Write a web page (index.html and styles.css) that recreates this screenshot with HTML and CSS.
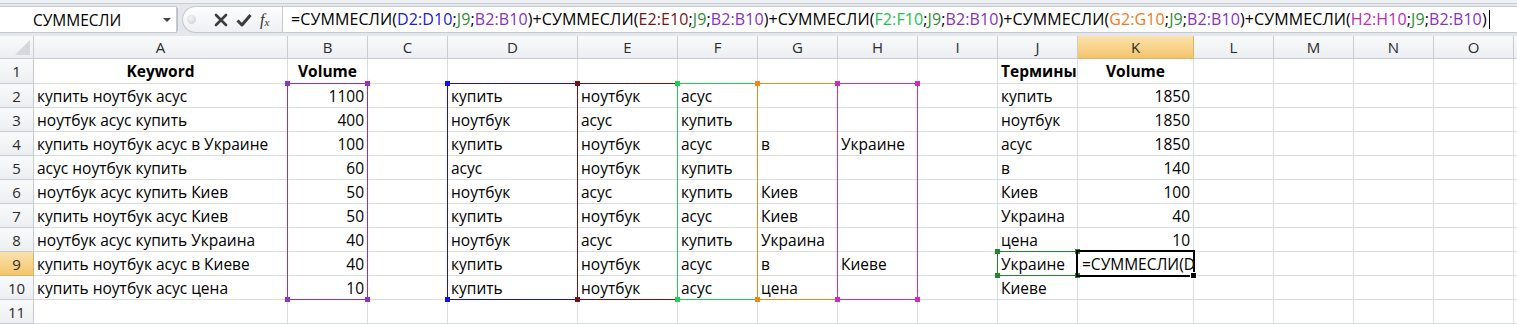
FILE: index.html
```html
<!DOCTYPE html>
<html lang="ru">
  <head>
    <meta charset="UTF-8" />
    <title>СУММЕСЛИ</title>
    <link rel="stylesheet" href="styles.css">
  </head>
  <body>
    <header class="topbar">
      <div class="namebox">
        <span>СУММЕСЛИ</span>
        <span class="arrow"></span>
      </div>
      <div class="splitter"></div>
      <div class="fxbtns">
        <span class="dot"></span>
        <svg class="btn" width="14" height="14" viewBox="0 0 14 14">
          <path d="M2 2 L12 12 M12 2 L2 12" stroke="#3c3c3c" stroke-width="2.6" stroke-linecap="round" />
        </svg>
        <svg class="btn" width="16" height="14" viewBox="0 0 16 14">
          <path d="M1.5 7.5 L6 12 L14.5 2" fill="none" stroke="#3c3c3c" stroke-width="3" stroke-linejoin="round" />
        </svg>
        <span class="fx">f<sub>x</sub></span>
      </div>
      <div class="formula">=СУММЕСЛИ(<span class="c-d">D2:D10</span>;<span class="c-j">J9</span>;<span class="c-b">B2:B10</span>)+СУММЕСЛИ(<span class="c-e">E2:E10</span>;<span class="c-j">J9</span>;<span class="c-b">B2:B10</span>)+СУММЕСЛИ(<span class="c-f">F2:F10</span>;<span class="c-j">J9</span>;<span class="c-b">B2:B10</span>)+СУММЕСЛИ(<span class="c-g">G2:G10</span>;<span class="c-j">J9</span>;<span class="c-b">B2:B10</span>)+СУММЕСЛИ(<span class="c-h">H2:H10</span>;<span class="c-j">J9</span>;<span class="c-b">B2:B10</span>)<span class="caret"></span></div>
    </header>

    <main class="sheet">
      <!-- column headers -->
      <div class="corner"></div>
      <div class="ch">A</div><div class="ch">B</div><div class="ch">C</div><div class="ch">D</div>
      <div class="ch">E</div><div class="ch">F</div><div class="ch">G</div><div class="ch">H</div>
      <div class="ch">I</div><div class="ch">J</div><div class="ch sel">K</div><div class="ch">L</div>
      <div class="ch">M</div><div class="ch">N</div><div class="ch">O</div><div class="ch"></div>

      <div class="rowh">1</div>
      <div class="b">Keyword</div><div class="b">Volume</div><div></div><div></div><div></div><div></div><div></div><div></div><div></div>
      <div class="bl">Термины</div><div class="b">Volume</div><div></div><div></div><div></div><div></div><div></div>

      <div class="rowh">2</div>
      <div>купить ноутбук асус</div><div class="n">1100</div><div></div><div>купить</div><div>ноутбук</div><div>асус</div><div></div><div></div><div></div>
      <div>купить</div><div class="n">1850</div><div></div><div></div><div></div><div></div><div></div>

      <div class="rowh">3</div>
      <div>ноутбук асус купить</div><div class="n">400</div><div></div><div>ноутбук</div><div>асус</div><div>купить</div><div></div><div></div><div></div>
      <div>ноутбук</div><div class="n">1850</div><div></div><div></div><div></div><div></div><div></div>

      <div class="rowh">4</div>
      <div>купить ноутбук асус в Украине</div><div class="n">100</div><div></div><div>купить</div><div>ноутбук</div><div>асус</div><div>в</div><div>Украине</div><div></div>
      <div>асус</div><div class="n">1850</div><div></div><div></div><div></div><div></div><div></div>

      <div class="rowh">5</div>
      <div>асус ноутбук купить</div><div class="n">60</div><div></div><div>асус</div><div>ноутбук</div><div>купить</div><div></div><div></div><div></div>
      <div>в</div><div class="n">140</div><div></div><div></div><div></div><div></div><div></div>

      <div class="rowh">6</div>
      <div>ноутбук асус купить Киев</div><div class="n">50</div><div></div><div>ноутбук</div><div>асус</div><div>купить</div><div>Киев</div><div></div><div></div>
      <div>Киев</div><div class="n">100</div><div></div><div></div><div></div><div></div><div></div>

      <div class="rowh">7</div>
      <div>купить ноутбук асус Киев</div><div class="n">50</div><div></div><div>купить</div><div>ноутбук</div><div>асус</div><div>Киев</div><div></div><div></div>
      <div>Украина</div><div class="n">40</div><div></div><div></div><div></div><div></div><div></div>

      <div class="rowh">8</div>
      <div>ноутбук асус купить Украина</div><div class="n">40</div><div></div><div>ноутбук</div><div>асус</div><div>купить</div><div>Украина</div><div></div><div></div>
      <div>цена</div><div class="n">10</div><div></div><div></div><div></div><div></div><div></div>

      <div class="rowh sel">9</div>
      <div>купить ноутбук асус в Киеве</div><div class="n">40</div><div></div><div>купить</div><div>ноутбук</div><div>асус</div><div>в</div><div>Киеве</div><div></div>
      <div>Украине</div><div class="edit">=СУММЕСЛИ(D2:D10</div><div></div><div></div><div></div><div></div><div></div>

      <div class="rowh">10</div>
      <div>купить ноутбук асус цена</div><div class="n">10</div><div></div><div>купить</div><div>ноутбук</div><div>асус</div><div>цена</div><div></div><div></div>
      <div>Киеве</div><div></div><div></div><div></div><div></div><div></div><div></div>

      <div class="rowh">11</div>
      <div></div><div></div><div></div><div></div><div></div><div></div><div></div><div></div><div></div>
      <div></div><div></div><div></div><div></div><div></div><div></div><div></div>

      <!-- reference highlights drawn over the grid -->
      <span class="range r-b"><i class="tl"></i><i class="tr"></i><i class="bl"></i><i class="br"></i></span>
      <span class="range r-d"><i class="tl"></i><i class="tr"></i><i class="bl"></i><i class="br"></i></span>
      <span class="range r-e"><i class="tl"></i><i class="tr"></i><i class="bl"></i><i class="br"></i></span>
      <span class="range r-f"><i class="tl"></i><i class="tr"></i><i class="bl"></i><i class="br"></i></span>
      <span class="range r-g"><i class="tl"></i><i class="tr"></i><i class="bl"></i><i class="br"></i></span>
      <span class="range r-h"><i class="tl"></i><i class="tr"></i><i class="bl"></i><i class="br"></i></span>
      <span class="range r-j"><i class="tl"></i><i class="tr"></i><i class="bl"></i><i class="br"></i></span>
      <span class="active"><i class="fill"></i></span>
    </main>
  </body>
</html>
```

FILE: styles.css
```css
body {
  margin: 0;
  width: 1517px;
  height: 324px;
  overflow: hidden;
  background-color: white;
  font-family: "Open Sans", "Liberation Sans", sans-serif;
  font-size: 15.5px;
  color: black;
}

/* formula bar */
.topbar {
  display: flex;
  height: 36px;
  box-sizing: border-box;
  padding: 6px 0 3px;
  background: linear-gradient(to bottom, #eef0f3 0 3px, #c9ced5 3px 4px, #e4e8ed 4px);
}

.namebox {
  width: 177px;
  box-sizing: border-box;
  display: flex;
  align-items: center;
  justify-content: space-between;
  padding: 0 5px 0 33px;
  background-color: white;
  border: 1px solid #c6cbd2;
  border-left: none;
}

.arrow {
  border-left: 4px solid transparent;
  border-right: 4px solid transparent;
  border-top: 4px solid #444;
}

.splitter {
  width: 1px;
  margin: 2px 2px 2px 0;
  background-color: #b9bec6;
}

.fxbtns {
  width: 100px;
  display: flex;
  align-items: center;
  margin-left: 2px;
  box-sizing: border-box;
  border: 1px solid #c3c8cf;
  border-right: none;
  border-radius: 14px 0 0 14px;
  background: linear-gradient(#fdfdfd, #eef0f3);
}

.dot {
  width: 9px;
  height: 9px;
  margin-left: 4px;
  border-radius: 50%;
  background: radial-gradient(circle at 40% 35%, #f4f4f4, #c9cdd2);
}

.btn {
  margin-left: 18px;
}

.btn + .btn {
  margin-left: 8px;
}

.fx {
  margin-left: 8px;
  font-family: "Liberation Serif", serif;
  font-style: italic;
  font-size: 16px;
  color: #333;
}

.fx sub {
  font-size: 11px;
  vertical-align: -1px;
}

.formula {
  flex: 1;
  line-height: 25px;
  padding-left: 8px;
  font-size: 16px;
  letter-spacing: 0.1px;
  white-space: nowrap;
  overflow: hidden;
  background-color: white;
  border: 1px solid #c6cbd2;
  border-right: none;
}

.caret {
  display: inline-block;
  width: 1px;
  height: 19px;
  margin-left: 2px;
  vertical-align: -4px;
  background-color: black;
}

.c-d { color: #2020d8; }
.c-j { color: #2f8f36; }
.c-b { color: #8a2fc0; }
.c-e { color: #7a1414; }
.c-f { color: #22c04c; }
.c-g { color: #ee7a20; }
.c-h { color: #c02ab0; }

/* sheet grid */
.sheet {
  position: relative;
  display: grid;
  grid-template-columns: 34px 254px 80px 80px 130px 100px 80px 80px 80px 80px 80px 116px 80px 80px 80px 80px 4px;
  grid-template-rows: 23px 25px repeat(10, 24px);
  overflow: hidden;
}

.sheet > div {
  box-sizing: border-box;
  display: flex;
  align-items: center;
  padding: 0 3px;
  overflow: hidden;
  white-space: nowrap;
  border-right: 1px solid #dadcdd;
  border-bottom: 1px solid #dadcdd;
}

.sheet > .ch,
.sheet > .rowh,
.sheet > .corner {
  justify-content: center;
  padding: 0;
  font-size: 15px;
  color: #2b2b2b;
  background: linear-gradient(#f9fafb, #eceef1);
  border-color: #c8ccd2;
}

.sheet > .corner {
  position: relative;
}

.corner::after {
  content: "";
  position: absolute;
  right: 3px;
  bottom: 3px;
  width: 15px;
  height: 15px;
  background-color: #d5d8dc;
  clip-path: polygon(100% 0, 100% 100%, 0 100%);
}

.sheet > .sel {
  background: linear-gradient(#fbe2ae, #f3c56b);
  border-color: #d9b46a;
}

.b {
  justify-content: center;
  font-weight: bold;
}

.bl {
  font-weight: bold;
}

.n {
  justify-content: flex-end;
}

.sheet > .edit {
  padding-left: 4px;
}

/* coloured reference boxes */
.range {
  position: absolute;
  z-index: 1;
  top: 47px;
  height: 217px;
  width: 81px;
  box-sizing: border-box;
  border-width: 1px;
  border-style: solid;
  pointer-events: none;
}

.range i {
  position: absolute;
  width: 5px;
  height: 5px;
}

.range .tl { left: -3px; top: -3px; }
.range .tr { right: -3px; top: -3px; }
.range .bl { left: -3px; bottom: -3px; }
.range .br { right: -3px; bottom: -3px; }

.r-b { left: 287px; border-color: #9130d0; }
.r-b i { background-color: #9130d0; }
.r-d { left: 447px; width: 131px; border-color: #1010f0; }
.r-d i { background-color: #1010f0; }
.r-e { left: 577px; width: 101px; border-color: #7a1010; }
.r-e i { background-color: #7a1010; }
.r-f { left: 677px; border-color: #1cd050; }
.r-f i { background-color: #1cd050; }
.r-g { left: 757px; border-color: #f88418; }
.r-g i { background-color: #f88418; }
.r-h { left: 837px; border-color: #d02ac0; }
.r-h i { background-color: #d02ac0; }

.r-j {
  left: 997px;
  top: 215px;
  height: 25px;
  border-color: #23862a #e57be0 #23862a #23862a;
}

.r-j i { background-color: #23862a; }

.active {
  position: absolute;
  z-index: 2;
  left: 1076px;
  top: 214px;
  width: 119px;
  height: 27px;
  box-sizing: border-box;
  border: 2px solid black;
}

.fill {
  position: absolute;
  right: -4px;
  bottom: -4px;
  width: 5px;
  height: 5px;
  background-color: black;
  border: 1px solid white;
}
```
